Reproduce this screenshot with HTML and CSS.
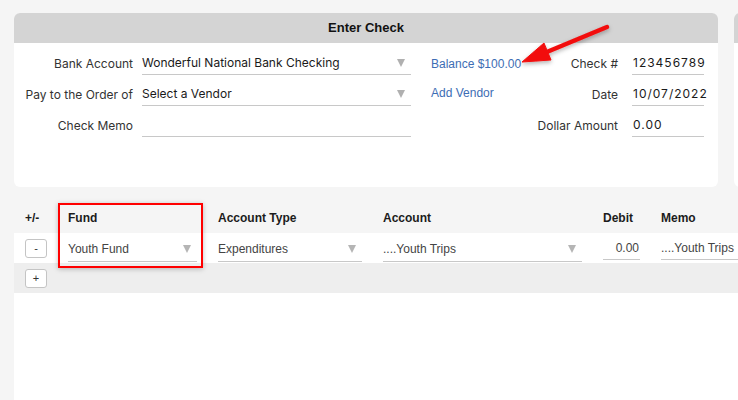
FILE: index.html
```html
<!DOCTYPE html>
<html lang="en">
<head>
  <meta charset="UTF-8" />
  <title>Enter Check</title>
  <link rel="stylesheet" href="styles.css">
</head>
<body>
  <div class="cards">
    <div class="card">
      <div class="card-head">Enter Check</div>
      <div class="card-body">
        <div class="label">Bank Account</div>
        <div class="field select">Wonderful National Bank Checking<span class="caret"></span></div>
        <div class="link">Balance $100.00</div>
        <div class="label label-right">Check #</div>
        <div class="field num">123456789</div>

        <div class="label">Pay to the Order of</div>
        <div class="field select">Select a Vendor<span class="caret"></span></div>
        <div class="link link-up">Add Vendor</div>
        <div class="label label-right">Date</div>
        <div class="field num">10/07/2022</div>

        <div class="label">Check Memo</div>
        <div class="field"></div>
        <div></div>
        <div class="label label-right">Dollar Amount</div>
        <div class="field num">0.00</div>
      </div>
    </div>
    <div class="card card-next">
      <div class="card-head"></div>
      <div class="card-body"></div>
    </div>
  </div>

  <div class="lines">
    <div class="line-row line-head">
      <div>+/-</div>
      <div>Fund</div>
      <div>Account Type</div>
      <div>Account</div>
      <div>Debit</div>
      <div>Memo</div>
    </div>
    <div class="line-row line-item">
      <div><button class="mini-btn">-</button></div>
      <div class="cell-field select">Youth Fund<span class="caret"></span></div>
      <div class="cell-field select">Expenditures<span class="caret"></span></div>
      <div class="cell-field select">....Youth Trips<span class="caret"></span></div>
      <div class="cell-field short amount">0.00</div>
      <div class="cell-field short">....Youth Trips</div>
    </div>
    <div class="line-row line-add">
      <div><button class="mini-btn">+</button></div>
    </div>
    <div class="lines-empty"></div>
  </div>

  <!-- annotations drawn over the screenshot -->
  <div class="highlight"></div>
  <svg class="arrow" width="110" height="60" viewBox="510 15 110 60">
    <defs>
      <filter id="shadow" x="-20%" y="-20%" width="140%" height="160%">
        <feDropShadow dx="0" dy="2" stdDeviation="2" flood-color="#000" flood-opacity="0.3"/>
      </filter>
    </defs>
    <g filter="url(#shadow)" fill="#f20d0d" stroke="#f20d0d">
      <line x1="607" y1="27" x2="542" y2="54" stroke-width="4.5" stroke-linecap="round"/>
      <polygon points="522,62 544,43 551,60" stroke-width="1" stroke-linejoin="round"/>
    </g>
  </svg>
</body>
</html>
```

FILE: styles.css
```css
html, body {
  margin: 0;
  height: 100%;
  overflow: hidden;
}
body {
  background: #f5f5f5;
  font-family: 'Inter', 'Liberation Sans', sans-serif;
  color: #222;
  position: relative;
}
.cards {
  display: flex;
  gap: 16px;
  padding: 13px 0 0 14px;
  width: 1100px;
}
.card {
  width: 704px;
  height: 174px;
  background: #fff;
  border-radius: 6px;
  flex-shrink: 0;
}
.card-next {
  width: 300px;
}
.card-head {
  height: 30px;
  line-height: 30px;
  background: #d4d4d4;
  border-radius: 6px 6px 0 0;
  text-align: center;
  font-family: 'Liberation Sans', Arial, sans-serif;
  font-weight: 700;
  font-size: 13px;
  color: #111;
}
.card-body {
  display: grid;
  grid-template-columns: 128px 269px 110px 1fr 72px;
  grid-auto-rows: 29px;
  row-gap: 2px;
  padding: 4px 14px 0 0;
  font-size: 12px;
}
.label {
  text-align: right;
  padding-right: 9px;
  padding-top: 4px;
  display: flex;
  align-items: center;
  justify-content: flex-end;
  color: #333;
  white-space: nowrap;
}
.label-right {
  padding-right: 14px;
}
.field {
  height: 28px;
  padding-top: 4px;
  box-sizing: border-box;
  border-bottom: 1px solid #c8c8c8;
  display: flex;
  align-items: center;
  color: #1a1a1a;
}
.field.num {
  letter-spacing: 1px;
  padding-left: 1px;
}
.select {
  position: relative;
}
.caret {
  margin-left: auto;
  margin-right: 6px;
  width: 0;
  height: 0;
  border-left: 4.5px solid transparent;
  border-right: 4.5px solid transparent;
  border-top: 8px solid #b0b0b0;
}
.link {
  padding-left: 20px;
  padding-top: 5px;
  display: flex;
  align-items: center;
  font-family: 'Liberation Sans', Arial, sans-serif;
  font-size: 12px;
  color: #3d6db4;
  white-space: nowrap;
}
.link-up {
  align-items: flex-start;
  padding-top: 8px;
}

.lines {
  margin: 13px 0 0 14px;
  width: 760px;
  font-family: 'Liberation Sans', Arial, sans-serif;
  font-size: 12px;
}
.line-row {
  display: grid;
  grid-template-columns: 22px 129px 144px 199px 37px 1fr;
  column-gap: 21px;
  padding-left: 11px;
  align-items: center;
}
.line-head {
  height: 33px;
  font-weight: 700;
  color: #1c1c1c;
  padding-top: 2px;
  box-sizing: border-box;
}
.line-item {
  height: 30px;
  background: #fff;
}
.line-add {
  height: 30px;
  background: #eeeeee;
}
.lines-empty {
  height: 107px;
  background: #fff;
}
.mini-btn {
  display: block;
  width: 22px;
  height: 19px;
  padding: 0;
  border: 1px solid #c4c4c4;
  border-radius: 3px;
  background: #fff;
  font-family: 'Liberation Sans', Arial, sans-serif;
  font-size: 11px;
  line-height: 16px;
  color: #333;
}
.cell-field {
  height: 24px;
  margin-top: 3px;
  border-bottom: 1px solid #c8c8c8;
  display: flex;
  align-items: center;
  color: #444;
}
.cell-field .caret {
  margin-right: 6px;
  border-top-color: #b5b5b5;
}
.cell-field.short {
  height: 22px;
  margin-top: 0;
}
.cell-field.amount {
  justify-content: flex-end;
  padding-right: 1px;
}

.highlight {
  position: absolute;
  left: 58px;
  top: 203px;
  width: 141px;
  height: 61px;
  border: 2px solid #f00;
  box-shadow: 0 1px 5px rgba(0, 0, 0, 0.25);
}
.arrow {
  position: absolute;
  left: 510px;
  top: 15px;
  overflow: visible;
}
```
